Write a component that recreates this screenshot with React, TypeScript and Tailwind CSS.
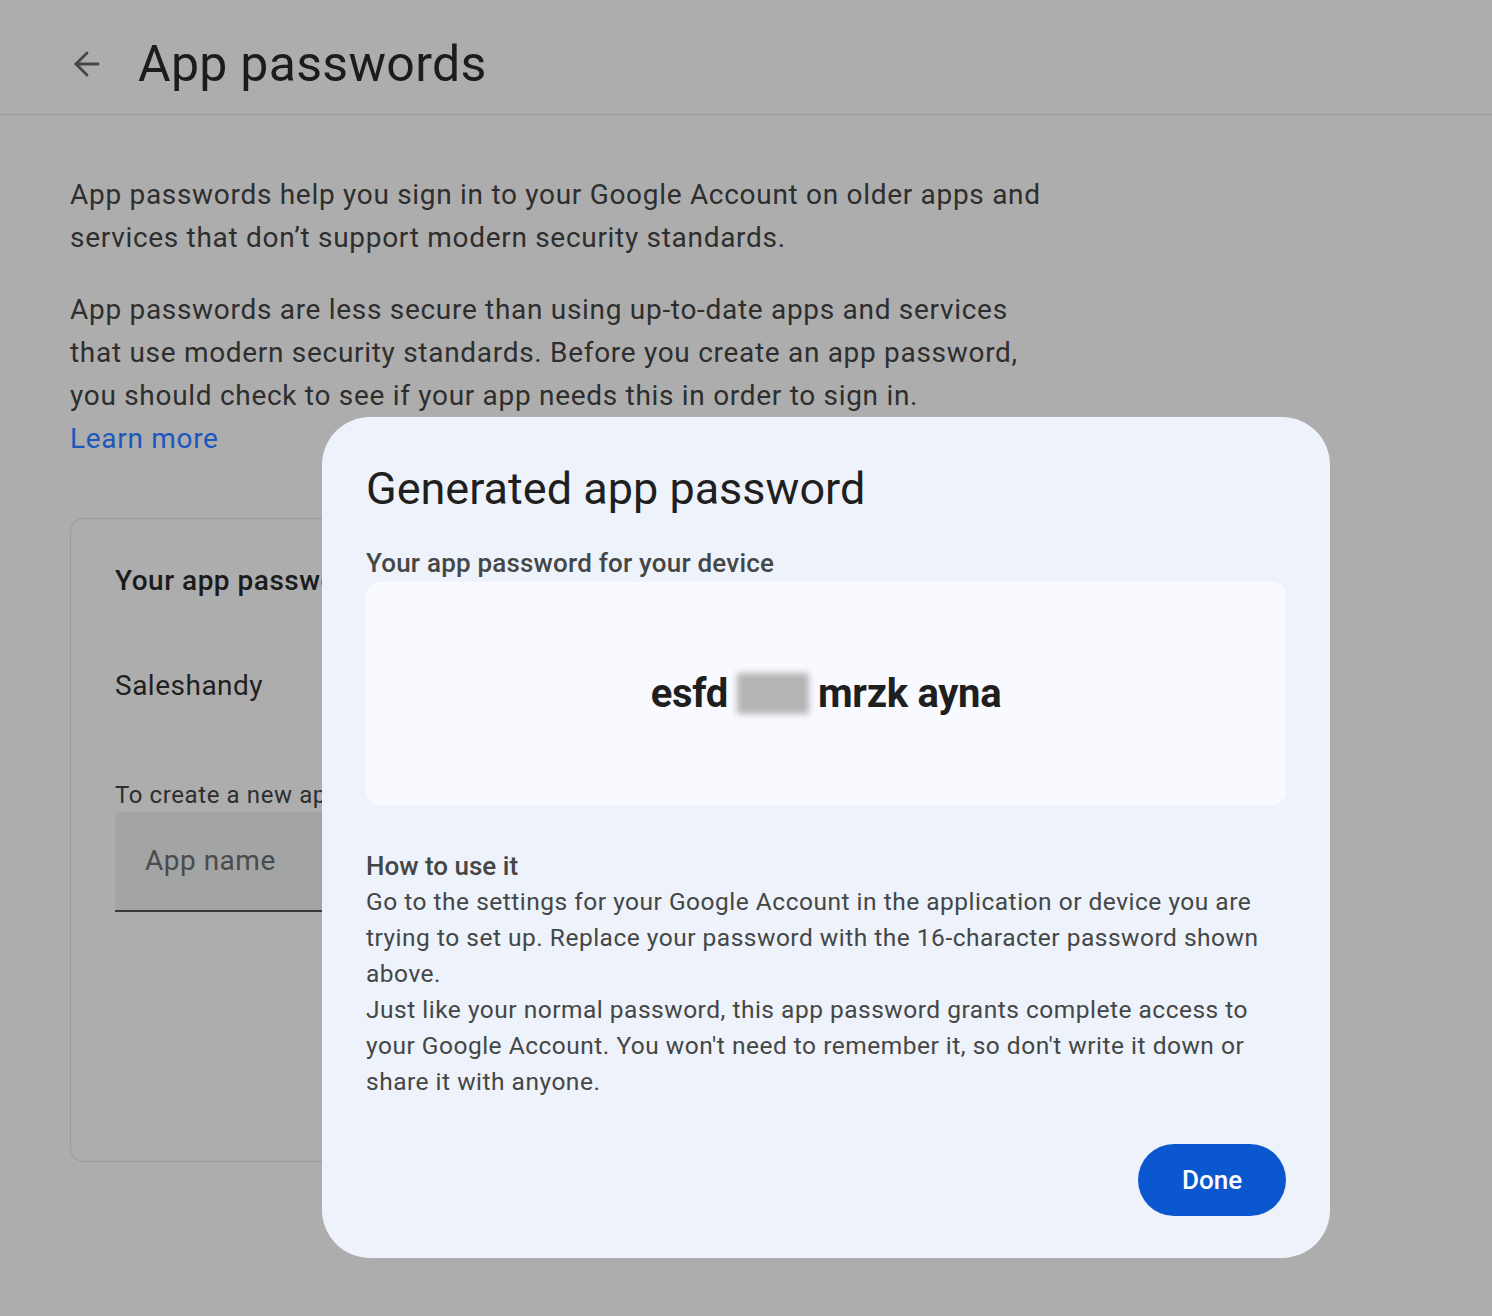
import { ArrowLeft } from "lucide-react";

const font = { fontFamily: "Roboto, 'Open Sans', sans-serif" };

export default function App() {
  return (
    <div
      className="relative min-h-[1316px] w-full overflow-hidden bg-[#adadad] text-[#2b2b2b]"
      style={font}
    >
      {/* Header */}
      <header className="flex h-[115px] items-center border-b border-[#9c9c9c] pl-[68px] pt-[14px]">
        <ArrowLeft className="h-[38px] w-[38px] text-[#484848]" strokeWidth={1.8} />
        <h1 className="ml-[32px] text-[50px] leading-none tracking-[0.3px] text-[#1c1c1c]">
          App passwords
        </h1>
      </header>

      {/* Page content (behind the scrim) */}
      <main className="pl-[70px] pt-[58px]">
        <p className="text-[28px] leading-[43px] tracking-[0.7px] text-[#2e2e2e]">
          App passwords help you sign in to your Google Account on older apps and
          <br />
          services that don’t support modern security standards.
        </p>
        <p className="mt-[29px] text-[28px] leading-[43px] tracking-[0.7px] text-[#2e2e2e]">
          App passwords are less secure than using up-to-date apps and services
          <br />
          that use modern security standards. Before you create an app password,
          <br />
          you should check to see if your app needs this in order to sign in.
        </p>
        <a className="block text-[28px] leading-[43px] tracking-[0.7px] text-[#1a58bf]">
          Learn more
        </a>

        <section className="mt-[58px] h-[644px] w-[980px] rounded-[14px] border border-[#9a9a9a] pl-[44px] pt-[44px]">
          <h2 className="text-[28px] font-medium leading-[36px] tracking-[0.5px] text-[#1b1b1b]">
            Your app passwords
          </h2>
          <div className="mt-[69px] text-[28px] leading-[36px] tracking-[0.5px] text-[#1f1f1f]">
            Saleshandy
          </div>
          <p className="mt-[74px] text-[24px] leading-[34px] tracking-[0.6px] text-[#2e2e2e]">
            To create a new app specific password, type a name for it below...
          </p>
          <div className="flex h-[100px] w-[600px] items-center rounded-t-[6px] border-b-2 border-[#3a3a3a] bg-[#a3a4a4] pl-[30px]">
            <span className="text-[28px] tracking-[0.5px] text-[#4a4b4d]">App name</span>
          </div>
        </section>
      </main>

      {/* Dialog */}
      <div className="absolute left-[322px] top-[417px] flex h-[841px] w-[1008px] flex-col rounded-[48px] bg-[#eef2fa] px-[44px] pt-[44px]">
        <h3 className="text-[45px] leading-[56px] text-[#1f1f1f]">Generated app password</h3>
        <div className="mt-[29px] text-[26px] font-medium leading-[34px] tracking-[0.2px] text-[#444746]">
          Your app password for your device
        </div>
        <div className="mt-[2px] flex h-[223px] shrink-0 items-center justify-center rounded-[14px] bg-[#f8faff]">
          <div className="flex items-center gap-[9px] text-[40px] font-bold tracking-[-0.3px] text-[#1f1f1f]">
            <span>esfd</span>
            <span className="h-[41px] w-[72px] bg-[#b5b5b5] blur-[3px]" />
            <span>mrzk ayna</span>
          </div>
        </div>
        <div className="mt-[43px] text-[26px] font-medium leading-[36px] text-[#444746]">
          How to use it
        </div>
        <p className="whitespace-nowrap text-[24.5px] leading-[36px] tracking-[0.5px] text-[#444746]">
          Go to the settings for your Google Account in the application or device you are
          <br />
          trying to set up. Replace your password with the 16-character password shown
          <br />
          above.
          <br />
          Just like your normal password, this app password grants complete access to
          <br />
          your Google Account. You won't need to remember it, so don't write it down or
          <br />
          share it with anyone.
        </p>
        <div className="mt-[44px] flex shrink-0 justify-end">
          <button className="h-[72px] w-[148px] rounded-full bg-[#0b57d0] text-[26px] font-medium text-white">
            Done
          </button>
        </div>
      </div>
    </div>
  );
}
